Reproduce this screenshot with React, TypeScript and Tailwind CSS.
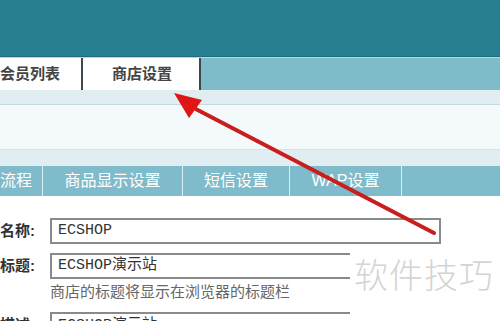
import React from 'react';

const cjk = { fontFamily: '"Liberation Sans", "Noto Sans CJK SC", sans-serif' };
const mono = { fontFamily: '"Liberation Mono", "Noto Sans CJK SC", monospace' };

function App() {
  return (
    <div className="relative w-[500px] h-[321px] overflow-hidden bg-white" style={cjk}>
      {/* top header */}
      <div className="h-[57px] bg-[#277f92] border-b border-[#1e6d7f]" />
      <div className="h-px bg-[#a9dce5]" />

      {/* main tabs */}
      <div className="flex h-[32px] bg-[#80bbc9]">
        <div className="flex items-center w-[83px] bg-white border-r-2 border-[#3a4a50] whitespace-nowrap">
          <span className="text-[15px] font-bold text-[#444]">会员列表</span>
        </div>
        <div className="flex items-center justify-center w-[118px] bg-white border-r-2 border-[#3a4a50] pl-[2px]">
          <span className="text-[15px] font-bold text-[#444]">商店设置</span>
        </div>
      </div>

      <div className="h-[15px] bg-[#e0edf1] border-b border-[#c6dae0]" />
      <div className="h-[45px] bg-[#f4f9fb] border-b border-[#d3e3e8]" />
      <div className="h-[16px] bg-[#e0edf1]" />

      {/* sub tabs */}
      <div className="flex h-[30px] bg-[#7fbbca] text-white text-[16px]">
        <div className="flex items-center w-[43px] border-r border-[#d8eef3] whitespace-nowrap">流程</div>
        <div className="flex items-center justify-center w-[140px] border-r border-[#d8eef3]">商品显示设置</div>
        <div className="flex items-center justify-center w-[107px] border-r border-[#d8eef3]">短信设置</div>
        <div className="flex items-center justify-center w-[112px] border-r border-[#d8eef3]">WAP设置</div>
      </div>

      {/* form */}
      <div className="flex flex-col pt-[22px]">
        <div className="flex items-center h-[26px]">
          <div className="w-[33px] whitespace-nowrap text-[15px] font-bold text-[#333]">名称:</div>
          <div className="ml-[17px] w-[391px] h-[26px] border-2 border-[#8a8a8a] flex items-center pl-[6px] text-[15px] text-[#333]" style={mono}>ECSHOP</div>
        </div>
        <div className="flex items-center h-[26px] mt-[9px]">
          <div className="w-[33px] whitespace-nowrap text-[15px] font-bold text-[#333]">标题:</div>
          <div className="ml-[17px] w-[300px] h-[26px] border-2 border-r-0 border-[#8a8a8a] flex items-center pl-[6px] text-[15px] text-[#333]" style={mono}>ECSHOP演示站</div>
        </div>
        <div className="ml-[50px] mt-[3px] text-[15px] text-[#666] leading-[20px]">商店的标题将显示在浏览器的标题栏</div>
        <div className="flex items-start h-[26px] mt-[10px]">
          <div className="w-[33px] whitespace-nowrap text-[15px] font-bold text-[#333] mt-[2px]">描述:</div>
          <div className="ml-[17px] w-[300px] h-[26px] border-2 border-r-0 border-[#8a8a8a] flex items-start pl-[6px] pt-[1px] text-[15px] text-[#333]" style={mono}>ECSHOP演示站</div>
        </div>
      </div>

      {/* watermark */}
      <div className="absolute left-[354px] top-[252px] whitespace-nowrap text-[34px] leading-[44px] text-[#d4d4d4] tracking-[1px]" style={{ fontFamily: '"Noto Sans CJK SC", sans-serif', fontWeight: 300 }}>
        软件技巧
      </div>

      {/* red arrow */}
      <svg className="absolute left-0 top-0" width="500" height="321" viewBox="0 0 500 321">
        <line x1="434" y1="233" x2="190" y2="106" stroke="#c81e1e" strokeWidth="4" strokeLinecap="round" />
        <polygon points="174,93 202,100 189,118" fill="#e01515" />
      </svg>
    </div>
  );
}

export default App;
